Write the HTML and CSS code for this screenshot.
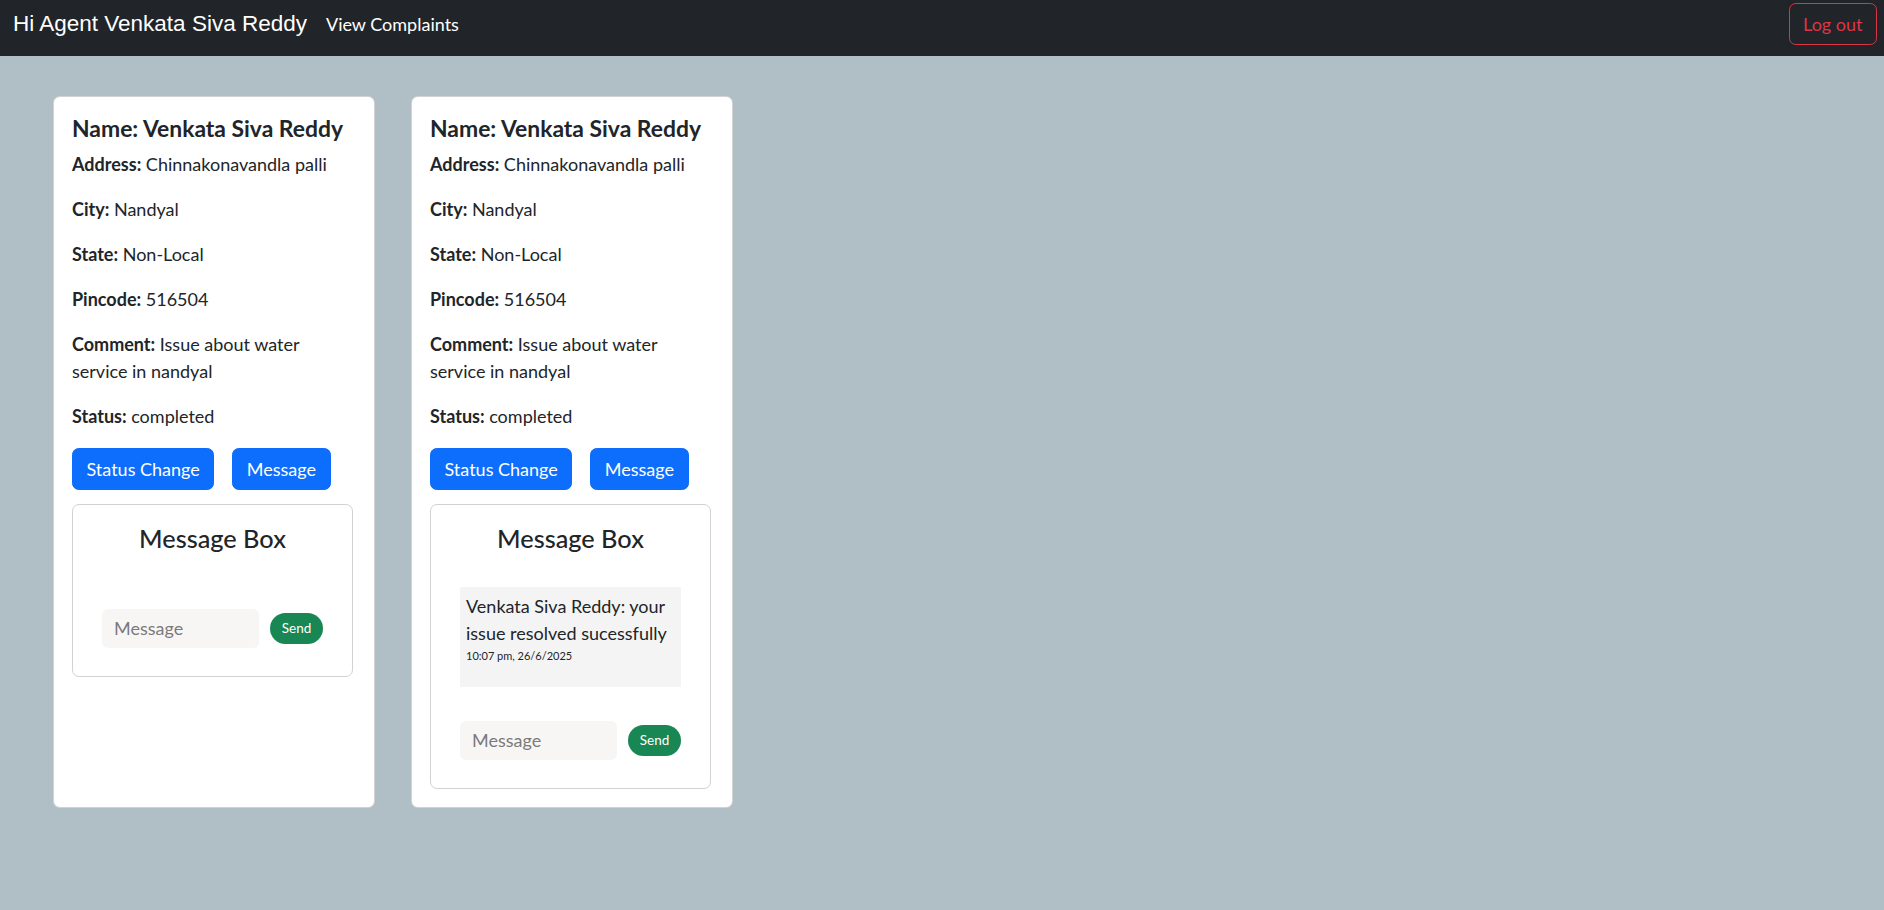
FILE: index.html
```html
<!DOCTYPE html>
<html lang="en">
<head>
<meta charset="utf-8">
<title>Agent Home</title>
<link rel="stylesheet" href="styles.css">
</head>
<body>
<nav class="navbar">
  <span class="brand">Hi Agent Venkata Siva Reddy</span>
  <a class="nav-link" href="#">View Complaints</a>
  <button class="btn-logout">Log out</button>
</nav>
<main class="cards">
  <div class="card">
    <h5 class="card-title">Name: Venkata Siva Reddy</h5>
    <p><b>Address:</b> Chinnakonavandla palli</p>
    <p><b>City:</b> Nandyal</p>
    <p><b>State:</b> Non-Local</p>
    <p><b>Pincode:</b> 516504</p>
    <p><b>Comment:</b> Issue about water service in nandyal</p>
    <p><b>Status:</b> completed</p>
    <div class="actions">
      <button class="btn-primary">Status Change</button>
      <button class="btn-primary">Message</button>
    </div>
    <div class="msg-box">
      <h4 class="msg-title">Message Box</h4>
      <div class="msgs"></div>
      <div class="send-row">
        <input class="msg-input" type="text" placeholder="Message">
        <button class="btn-send">Send</button>
      </div>
    </div>
  </div>
  <div class="card">
    <h5 class="card-title">Name: Venkata Siva Reddy</h5>
    <p><b>Address:</b> Chinnakonavandla palli</p>
    <p><b>City:</b> Nandyal</p>
    <p><b>State:</b> Non-Local</p>
    <p><b>Pincode:</b> 516504</p>
    <p><b>Comment:</b> Issue about water service in nandyal</p>
    <p><b>Status:</b> completed</p>
    <div class="actions">
      <button class="btn-primary">Status Change</button>
      <button class="btn-primary">Message</button>
    </div>
    <div class="msg-box">
      <h4 class="msg-title">Message Box</h4>
      <div class="msgs">
        <div class="bubble">
          <p class="bubble-text">Venkata Siva Reddy: your issue resolved sucessfully</p>
          <p class="bubble-time">10:07 pm, 26/6/2025</p>
        </div>
      </div>
      <div class="send-row">
        <input class="msg-input" type="text" placeholder="Message">
        <button class="btn-send">Send</button>
      </div>
    </div>
  </div>
</main>
</body>
</html>
```
FILE: styles.css
```css
* { box-sizing: border-box; }
html, body { margin: 0; padding: 0; }
body {
  background: #b0bec5;
  min-height: 910px;
  font-family: Lato, Roboto, "Liberation Sans", sans-serif;
  font-size: 18px;
  line-height: 27px;
  color: #212529;
}
.navbar {
  height: 56px;
  background: #212529;
  display: flex;
  align-items: flex-start;
  padding: 3px 7px 0 13px;
}
.brand {
  font-family: "Liberation Sans", Arial, sans-serif;
  font-size: 22.5px;
  line-height: 42px;
  color: #fff;
  margin-right: 19px;
}
.nav-link {
  font-size: 18px;
  line-height: 42px;
  color: #fff;
  text-decoration: none;
}
.btn-logout {
  margin-left: auto;
  height: 42px;
  padding: 0 13.5px;
  font-family: inherit;
  font-size: 18px;
  color: #dc3545;
  background: transparent;
  border: 1px solid #dc3545;
  border-radius: 6.75px;
}
.cards {
  display: flex;
  align-items: stretch;
  gap: 36px;
  padding: 40px 53px;
}
.card {
  width: 322px;
  background: #fff;
  border: 1px solid rgba(0,0,0,.175);
  border-radius: 6.75px;
  padding: 18px;
}
.card-title {
  margin: 0 0 9px;
  font-size: 22.9px;
  line-height: 27px;
  font-weight: 700;
}
.card p { margin: 0 0 18px; }
.card b { font-weight: 700; }
.actions {
  display: flex;
  gap: 18px;
  margin-bottom: 14px;
}
.btn-primary {
  height: 42px;
  padding: 0 13.5px;
  font-family: inherit;
  font-size: 18px;
  color: #fff;
  background: #0d6efd;
  border: 1px solid #0d6efd;
  border-radius: 6.75px;
}
.msg-box {
  width: 281px;
  border: 1px solid #d2d2d2;
  border-radius: 7px;
  padding: 19px 29px 28px;
}
.msg-title {
  margin: 0 0 9px;
  text-align: center;
  font-size: 25.3px;
  line-height: 29px;
  font-weight: 500;
}
.msgs { padding: 25px 0 22px; }
.bubble {
  background: #f4f4f4;
  padding: 5.5px 6px;
  margin-bottom: 12px;
}
.card .bubble-text { margin: 0; font-size: 18px; line-height: 27px; }
.card .bubble-time { margin: 0 0 18px; font-size: 11px; line-height: 17px; }
.send-row {
  display: flex;
  align-items: center;
  justify-content: space-between;
}
.msg-input {
  width: 157px;
  height: 38.7px;
  padding: 0 12px;
  font-family: inherit;
  font-size: 18px;
  color: #212529;
  background: #f8f6f5;
  border: none;
  border-radius: 6px;
  outline: none;
}
.msg-input::placeholder { color: #7a7a7a; }
.btn-send {
  width: 53px;
  height: 31px;
  padding: 0;
  font-family: inherit;
  font-size: 13.5px;
  color: #fff;
  background: #198754;
  border: none;
  border-radius: 16px;
}
```
